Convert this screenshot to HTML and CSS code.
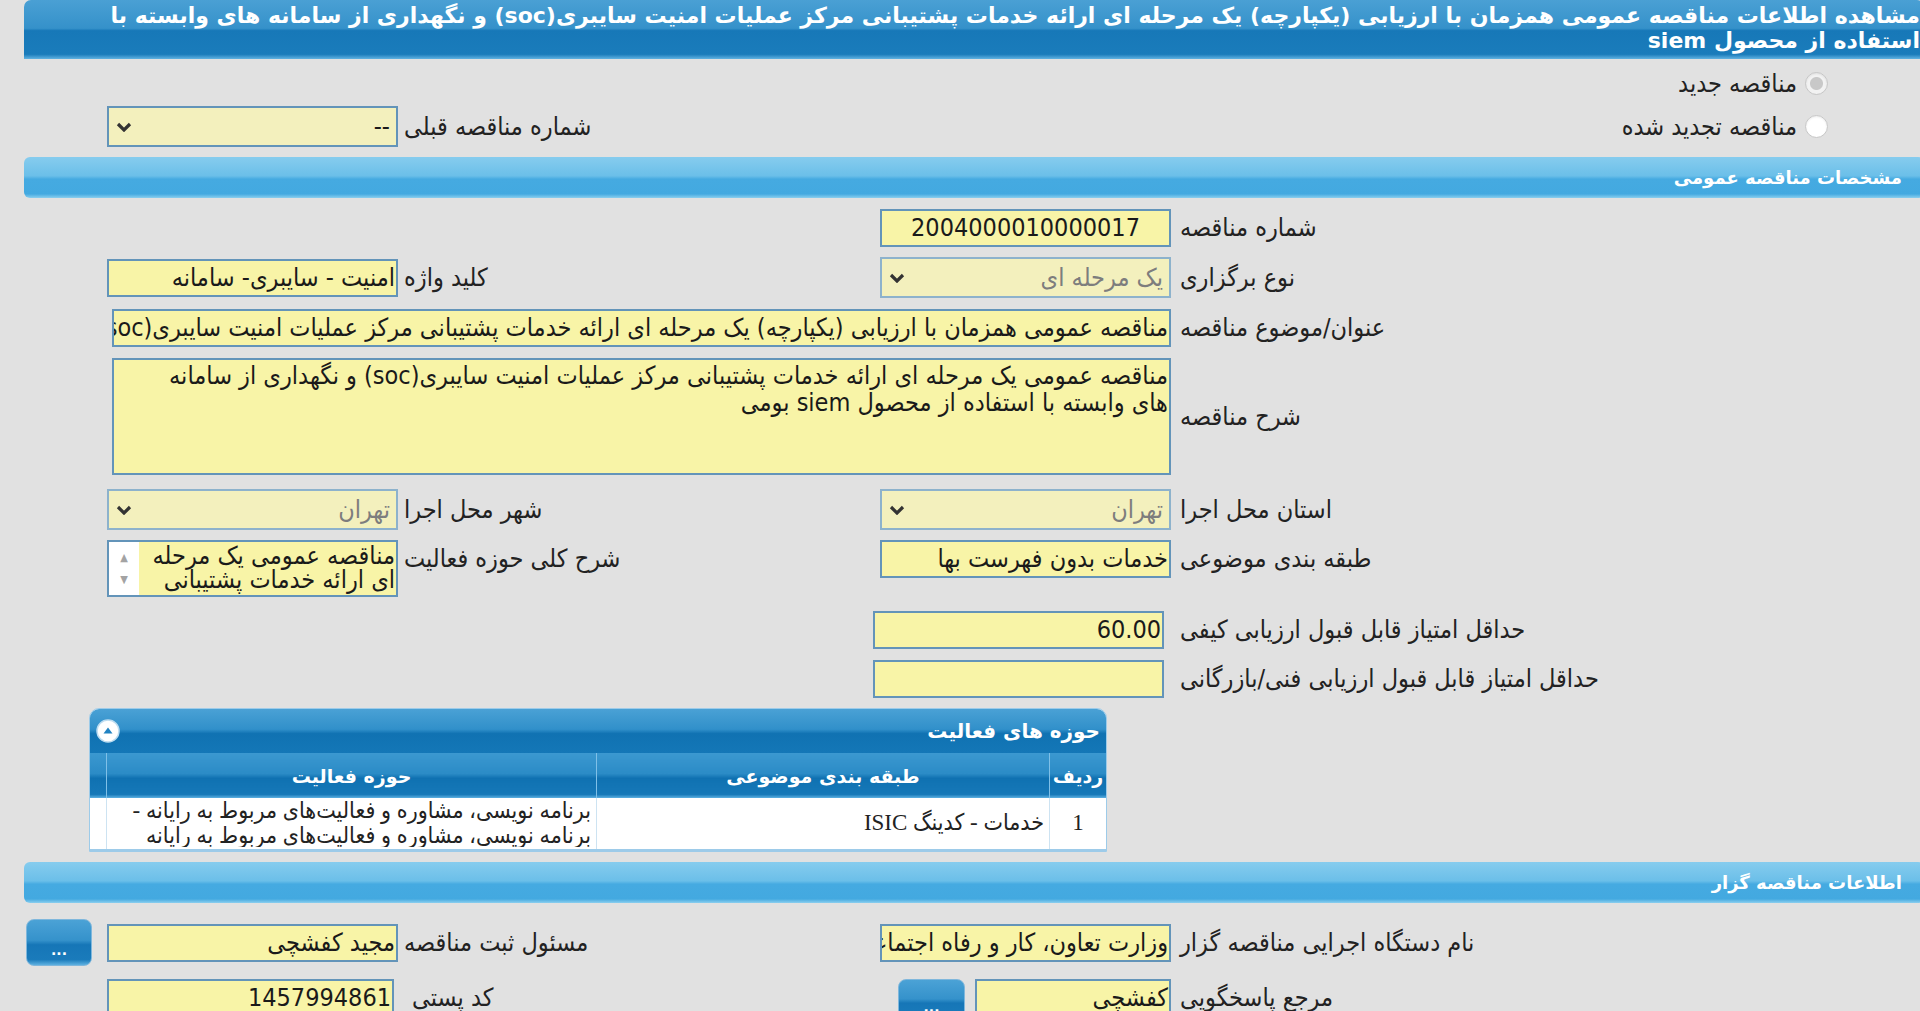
FILE: index.html
```html
<!DOCTYPE html>
<html lang="fa" dir="rtl">
<head>
    <meta charset="UTF-8">
    <meta name="viewport" content="width=device-width, initial-scale=1.0">
    <title>مشاهده اطلاعات مناقصه</title>
    <link rel="stylesheet" href="styles.css">
</head>
<body>
<div class="page">
    <div class="page-title">مشاهده اطلاعات مناقصه عمومی همزمان با ارزیابی (یکپارچه) یک مرحله ای ارائه خدمات پشتیبانی مرکز عملیات امنیت سایبری(soc) و نگهداری از سامانه های وابسته با استفاده از محصول siem</div>

    <div class="form-row radio-row">
        <label class="radio-line c-rlabel"><span class="radio checked"></span>مناقصه جدید</label>
    </div>
    <div class="form-row select-row gap-xs">
        <label class="radio-line c-rlabel"><span class="radio"></span>مناقصه تجدید شده</label>
        <span class="lbl c-llabel">شماره مناقصه قبلی</span>
        <div class="select c-lfield"><span class="select-text">--</span><svg class="chev" width="16" height="10" viewBox="0 0 16 10"><path d="M2 2 L8 8 L14 2" fill="none" stroke="#333" stroke-width="3.2"/></svg></div>
    </div>

    <div class="section-title">مشخصات مناقصه عمومی</div>

    <div class="form-row">
        <span class="lbl c-rlabel">شماره مناقصه</span>
        <div class="input c-rfield centered">2004000010000017</div>
    </div>
    <div class="form-row select-row gap-sm">
        <span class="lbl c-rlabel">نوع برگزاری</span>
        <div class="select disabled c-rfield"><span class="select-text">یک مرحله ای</span><svg class="chev" width="16" height="10" viewBox="0 0 16 10"><path d="M2 2 L8 8 L14 2" fill="none" stroke="#333" stroke-width="3.2"/></svg></div>
        <span class="lbl c-llabel">کلید واژه</span>
        <div class="input c-lfield">امنیت - سایبری- سامانه</div>
    </div>
    <div class="form-row">
        <span class="lbl c-rlabel">عنوان/موضوع مناقصه</span>
        <div class="input c-wide">مناقصه عمومی همزمان با ارزیابی (یکپارچه) یک مرحله ای ارائه خدمات پشتیبانی مرکز عملیات امنیت سایبری(soc)</div>
    </div>
    <div class="form-row textarea-row">
        <span class="lbl c-rlabel">شرح مناقصه</span>
        <div class="textarea c-wide">مناقصه عمومی یک مرحله ای ارائه خدمات پشتیبانی مرکز عملیات امنیت سایبری(soc) و نگهداری از سامانه های وابسته با استفاده از محصول siem بومی</div>
    </div>
    <div class="form-row select-row gap-lg">
        <span class="lbl c-rlabel">استان محل اجرا</span>
        <div class="select disabled c-rfield"><span class="select-text">تهران</span><svg class="chev" width="16" height="10" viewBox="0 0 16 10"><path d="M2 2 L8 8 L14 2" fill="none" stroke="#333" stroke-width="3.2"/></svg></div>
        <span class="lbl c-llabel">شهر محل اجرا</span>
        <div class="select disabled c-lfield"><span class="select-text">تهران</span><svg class="chev" width="16" height="10" viewBox="0 0 16 10"><path d="M2 2 L8 8 L14 2" fill="none" stroke="#333" stroke-width="3.2"/></svg></div>
    </div>
    <div class="form-row top-row gap-sm">
        <span class="lbl c-rlabel">طبقه بندی موضوعی</span>
        <div class="input c-rfield">خدمات بدون فهرست بها</div>
        <span class="lbl c-llabel">شرح کلی حوزه فعالیت</span>
        <div class="listbox c-lfield">
            <div class="listbox-text">مناقصه عمومی یک مرحله ای ارائه خدمات پشتیبانی</div>
            <div class="listbox-bar"><span>&#9650;</span><span>&#9660;</span></div>
        </div>
    </div>
    <div class="form-row gap-lg">
        <span class="lbl c-rlabel">حداقل امتیاز قابل قبول ارزیابی کیفی</span>
        <div class="input c-rfield shifted">60.00</div>
    </div>
    <div class="form-row">
        <span class="lbl c-rlabel">حداقل امتیاز قابل قبول ارزیابی فنی/بازرگانی</span>
        <div class="input c-rfield shifted"></div>
    </div>

    <div class="panel">
        <div class="panel-head">
            <span class="panel-title">حوزه های فعالیت</span>
            <svg class="collapse" width="24" height="24" viewBox="0 0 24 24"><circle cx="12" cy="12" r="11" fill="#fff" stroke="#bcdcf0" stroke-width="1.5"/><path d="M7.5 14.5 L12 8.5 L16.5 14.5 Z" fill="#2283c2"/></svg>
        </div>
        <table class="grid-table">
            <thead>
            <tr>
                <th class="col-idx">ردیف</th>
                <th class="col-cat">طبقه بندی موضوعی</th>
                <th class="col-act">حوزه فعالیت</th>
                <th class="col-gutter"></th>
            </tr>
            </thead>
            <tbody>
            <tr>
                <td class="col-idx"><div class="cell">1</div></td>
                <td class="col-cat"><div class="cell">خدمات - کدینگ ISIC</div></td>
                <td class="col-act"><div class="cell">برنامه نویسی، مشاوره و فعالیت‌های مربوط به رایانه -<br>برنامه نویسی، مشاوره و فعالیت‌های مربوط به رایانه</div></td>
                <td class="col-gutter"></td>
            </tr>
            </tbody>
        </table>
    </div>

    <div class="section-title">اطلاعات مناقصه گزار</div>

    <div class="form-row gap-xl">
        <span class="lbl c-rlabel">نام دستگاه اجرایی مناقصه گزار</span>
        <div class="input c-rfield">وزارت تعاون، کار و رفاه اجتماعی</div>
        <span class="lbl c-llabel">مسئول ثبت مناقصه</span>
        <div class="input c-lfield">مجید کفشچی</div>
        <button class="dots-btn c-btn">...</button>
    </div>
    <div class="form-row gap-xl">
        <span class="lbl c-rlabel">مرجع پاسخگویی</span>
        <div class="field-group c-rfield">
            <div class="input short">کفشچی</div>
            <button class="dots-btn">...</button>
        </div>
        <span class="lbl c-llabel wide-pad">کد پستی</span>
        <div class="input c-lfield narrow">1457994861</div>
    </div>
</div>
</body>
</html>
```

FILE: styles.css
```css
html, body {
    margin: 0;
    padding: 0;
}
body {
    background-color: #e1e1e1;
    font-family: "DejaVu Sans Condensed", "DejaVu Sans", sans-serif;
    font-size: 25px;
    color: #222;
    direction: rtl;
    overflow: hidden;
    height: 1011px;
}
.page {
    margin-left: 24px;
    margin-right: -4px;
}

/* title bar */
.page-title {
    height: 59px;
    box-sizing: border-box;
    padding: 3px 4px 0 60px;
    color: #fff;
    font-family: "DejaVu Sans", sans-serif;
    font-weight: bold;
    font-size: 22px;
    line-height: 25px;
    overflow: hidden;
    border-radius: 7px 7px 0 0;
    background: linear-gradient(#4aa0d4 0%, #3591ca 48%, #1778b8 52%, #1a7cbb 92%, #62b3e2 100%);
}
.section-title {
    height: 41px;
    line-height: 41px;
    margin-top: 10px;
    padding-right: 22px;
    color: #fff;
    font-family: "DejaVu Sans", sans-serif;
    font-weight: bold;
    font-size: 18px;
    border-radius: 6px;
    background: linear-gradient(#86ccee 0%, #6bbfe9 46%, #45aae1 54%, #43a9e0 90%, #8bcfef 100%);
}

/* form rows */
.form-row {
    display: grid;
    grid-template-columns: 1fr 291px 482px 291px 83px;
    align-items: center;
    height: 38px;
    margin-top: 11px;
}
.radio-row {
    margin-top: 5px;
}
.select-row {
    height: 41px;
}
.textarea-row {
    height: 117px;
}
.top-row {
    height: 57px;
    align-items: start;
}
.gap-xs { margin-top: 4px; }
.gap-sm { margin-top: 10px; }
.gap-lg { margin-top: 14px; }
.gap-xl { margin-top: 16px; }

.c-rlabel { grid-column: 1; }
.c-rfield { grid-column: 2; }
.c-llabel { grid-column: 3; }
.c-lfield { grid-column: 4; }
.c-btn { grid-column: 5; }
.c-wide {
    grid-column: 2 / 5;
    margin-left: 5px;
}

.lbl {
    text-align: left;
    padding-left: 9px;
    line-height: 38px;
    white-space: nowrap;
}
.c-llabel {
    padding-left: 6px;
}
.c-llabel.wide-pad {
    padding-left: 14px;
}

/* radios */
.radio-line {
    display: flex;
    align-items: center;
    gap: 8px;
    padding-right: 96px;
}
.radio {
    width: 21px;
    height: 21px;
    border-radius: 50%;
    border: 1px solid #c6c6c6;
    background: #fff;
    box-shadow: inset 0 1px 2px rgba(0, 0, 0, 0.08);
}
.radio.checked {
    background: radial-gradient(circle, #c8c8c8 0, #c8c8c8 6px, #f2f2f2 7px);
}

/* inputs */
.input, .select, .textarea, .listbox {
    box-sizing: border-box;
    border: 2px solid #6394b9;
    background-color: #f8f4a7;
    color: #1a1a1a;
}
.input {
    height: 38px;
    line-height: 34px;
    padding: 0 1px;
    white-space: nowrap;
    overflow: hidden;
}
.input.centered {
    text-align: center;
}
.input.shifted {
    margin-left: -7px;
    margin-right: 7px;
}
.input.narrow {
    width: 287px;
    justify-self: end;
}
.input.short {
    width: 196px;
}
.select {
    height: 41px;
    display: flex;
    align-items: center;
    justify-content: space-between;
    padding: 0 6px 0 7px;
    background-color: #f3f0bd;
}
.select.disabled {
    border-color: #8db2cc;
    color: #7d7d7d;
}
.chev {
    display: block;
}
.textarea {
    height: 117px;
    padding: 2px 1px 0 32px;
    line-height: 27px;
}
.listbox {
    height: 57px;
    display: flex;
    overflow: hidden;
}
.listbox-text {
    flex: 1;
    line-height: 24px;
    padding: 2px 1px 0 0;
    overflow: hidden;
}
.listbox-bar {
    width: 30px;
    background: #fff;
    display: flex;
    flex-direction: column;
    justify-content: space-around;
    align-items: center;
    color: #a3a3a3;
    font-size: 11px;
    padding: 4px 0;
}

/* buttons */
.dots-btn {
    width: 66px;
    height: 47px;
    border: 1px solid #7fb7dc;
    border-radius: 8px;
    color: #fff;
    font-weight: bold;
    font-size: 14px;
    font-family: "DejaVu Sans", sans-serif;
    display: flex;
    align-items: flex-end;
    justify-content: center;
    padding-bottom: 7px;
    box-sizing: border-box;
    cursor: pointer;
    background: linear-gradient(#4ba2d6 0%, #3592cb 45%, #1676b7 55%, #1a7bbb 88%, #5eb0e0 100%);
}
.c-btn {
    justify-self: end;
    margin-left: 2px;
}
.field-group {
    display: flex;
    gap: 10px;
    align-items: center;
}
.field-group .dots-btn {
    width: 67px;
    height: 44px;
    margin-top: 6px;
}

/* activity panel */
.panel {
    width: 1016px;
    margin-right: 817px;
    margin-top: 10px;
    border: 1px solid #9dcbe9;
    border-radius: 10px 10px 0 0;
    background: #fff;
    overflow: hidden;
}
.panel-head {
    height: 44px;
    display: flex;
    align-items: center;
    justify-content: space-between;
    padding: 0 6px 0 6px;
    color: #fff;
    font-family: "DejaVu Sans", sans-serif;
    font-weight: bold;
    font-size: 20px;
    background: linear-gradient(#4aa1d5 0%, #3190ca 46%, #1072b2 56%, #1477b7 100%);
}
.collapse {
    display: block;
}
.grid-table {
    width: 100%;
    border-collapse: collapse;
    table-layout: fixed;
}
.grid-table th {
    height: 45px;
    color: #fff;
    font-family: "DejaVu Sans", sans-serif;
    font-weight: bold;
    font-size: 19px;
    text-align: center;
    padding: 0;
    border-left: 1px solid #7fc0e8;
    background: linear-gradient(#3b98d0 0%, #2b8bc6 46%, #0f71b1 56%, #1678b8 92%, #5db0e1 100%);
}
.grid-table td {
    height: 51px;
    padding: 0 5px;
    vertical-align: top;
    font-family: "Liberation Serif", "DejaVu Sans Condensed", "DejaVu Sans", serif;
    font-size: 23px;
    text-align: right;
    border-left: 1px solid #cde3f2;
    border-bottom: 2px solid #9dcbe9;
}
.grid-table .cell {
    height: 49px;
    line-height: 25px;
    overflow: hidden;
}
.grid-table .col-cat .cell,
.grid-table .col-idx .cell {
    line-height: 49px;
}
.grid-table .col-idx {
    width: 56px;
    text-align: center;
}
.grid-table .col-cat {
    width: 452px;
}
.grid-table .col-act {
    width: 489px;
}
.grid-table .col-gutter {
    width: 19px;
    border-left: none;
}
```
